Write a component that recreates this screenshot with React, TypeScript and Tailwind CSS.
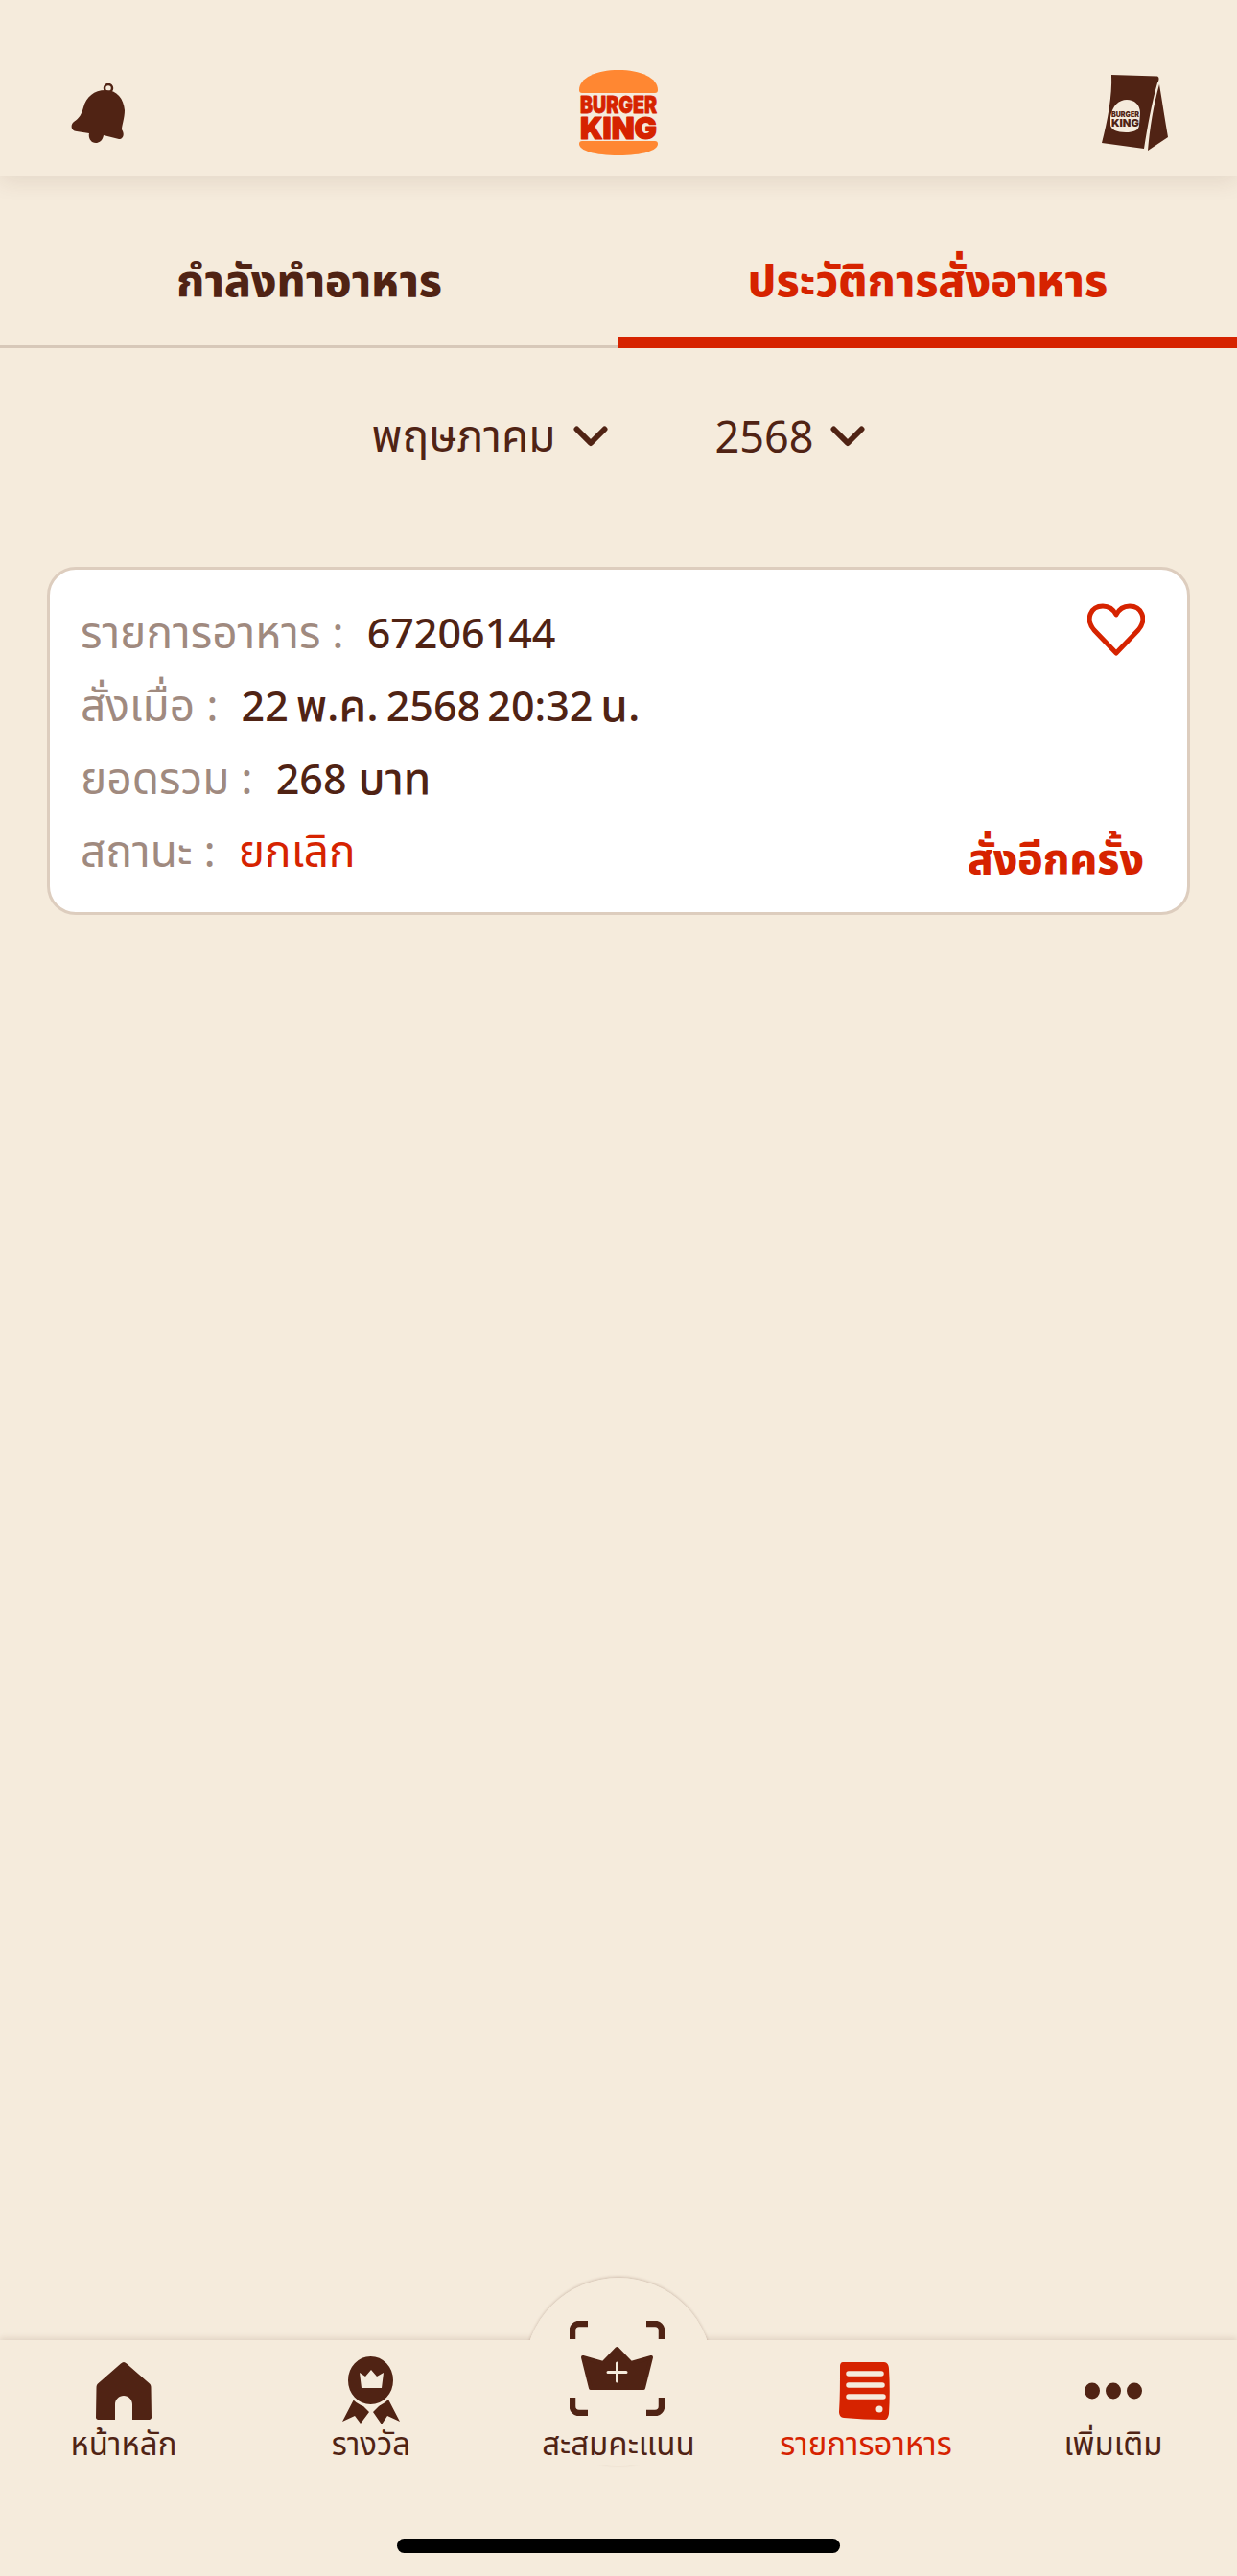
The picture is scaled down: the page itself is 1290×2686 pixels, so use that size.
import type { ReactNode } from "react";

function Bell() {
  return (
    <svg viewBox="0 0 56 62" className="h-[62px] w-[56px]" fill="#502314">
      <circle cx="39" cy="5" r="4" fill="none" stroke="#502314" strokeWidth="2.500" />
      <path d="M36 7C48 7 55 16 56 28 56 36 53 44 53 48 56 52 55 58 50 58L34 54C33 60 29 62 26 62 20 62 18 56 19 52L6 50C0 50-1 43 3 40 9 36 11 32 13 25 16 14 24 7 36 7z" />
    </svg>
  );
}

function Logo() {
  return (
    <svg viewBox="0 0 82 89" className="h-[89px] w-[82px]">
      <path d="M0 21C0 8 18 0 41 0s41 8 41 21c0 2-1 3-3 3H3c-2 0-3-1-3-3z" fill="#ff8732" />
      <path d="M3 74h76c2 0 3 1 3 3 0 7-16 12-41 12S0 84 0 77c0-2 1-3 3-3z" fill="#ff8732" />
      <g textAnchor="middle" fontFamily="Inter, sans-serif" fontWeight="900" fill="#d62300" stroke="#d62300" strokeLinejoin="round">
        <text x="41" y="45" fontSize="25" strokeWidth="0.8" textLength="80" lengthAdjust="spacingAndGlyphs">BURGER</text>
        <text x="41" y="71.500" fontSize="31" strokeWidth="1.200" textLength="80" lengthAdjust="spacingAndGlyphs">KING</text>
      </g>
    </svg>
  );
}

function Bag() {
  return (
    <svg viewBox="0 0 69 79" className="h-[79px] w-[69px]">
      <path d="M10 0l48 1.500c2 1 2 4 0 7C52 30 48 52 44 77L0 71C6 48 11 22 10 0z" fill="#502314" />
      <path d="M60 10c3 18 6 38 9 55L48 79c2-24 6-48 12-69z" fill="#502314" />
      <path d="M9 44c2-12 9-18 17-18s14 5 14 14l-1 12c0 6-6 8-14 8-9 0-16-3-16-8z" fill="#f5ebdc" />
      <g textAnchor="middle" fontFamily="Inter, sans-serif" fontWeight="900" fill="#502314">
        <text x="24.500" y="44" fontSize="8" textLength="29" lengthAdjust="spacingAndGlyphs">BURGER</text>
        <text x="24.500" y="54" fontSize="11" textLength="29" lengthAdjust="spacingAndGlyphs">KING</text>
      </g>
    </svg>
  );
}

function Chevron() {
  return (
    <svg viewBox="0 0 36 22" className="h-[22px] w-[36px]" fill="none" stroke="#502314" strokeWidth="6" strokeLinecap="round" strokeLinejoin="round">
      <path d="M3.500 3.500L18 18 32.500 3.500" />
    </svg>
  );
}

function Heart() {
  return (
    <svg viewBox="0 0 60 56" className="h-[56px] w-[60px]" fill="none" stroke="#d62300" strokeWidth="5" strokeLinejoin="round">
      <path d="M30 52L7 28C-3 16 4 3 16 3c6 0 11 3 14 9 3-6 8-9 14-9 12 0 19 13 9 25z" />
    </svg>
  );
}

function Num({ children }: { children: ReactNode }) {
  return <span className="text-[43px]">{children}</span>;
}

function Row({ label, children, danger }: { label: string; children: ReactNode; danger?: boolean }) {
  return (
    <div className="flex h-[76px] items-center">
      <span className="mr-6 text-[#a08a7f]">{label}</span>
      <span className={danger ? "text-[#d62300]" : "font-medium"}>{children}</span>
    </div>
  );
}

function NavHome() {
  return (
    <svg viewBox="0 0 58 60" className="h-[60px] w-[58px]">
      <path d="M26 1.500c2-2 4-2 6 0l24 21c1 1 1.500 2 1.500 4l.5 31c0 1.500-1 2.500-2.500 2.500H38V44c0-5-4-9-9-9s-9 4-9 9v16H2.500C1 60 0 59 0 57.500l.5-31c0-2 .5-3 1.500-4z" fill="#502314" />
    </svg>
  );
}

function NavReward() {
  return (
    <svg viewBox="0 0 60 71" className="h-[71px] w-[60px]">
      <path d="M13 43l15 15-9 12-6-8-13 6zM47 43L32 58l9 13 6-9 13 6z" fill="#502314" />
      <ellipse cx="29.500" cy="25" rx="25" ry="26.500" fill="#502314" stroke="#f5ebdc" strokeWidth="3" />
      <path d="M18 17l6 4 6-7 6 7 7-4-2 16H20z" fill="#f5ebdc" />
    </svg>
  );
}

function NavScan() {
  return (
    <svg viewBox="0 0 99 99" className="h-[99px] w-[99px]">
      <g fill="none" stroke="#502314" strokeWidth="6.500">
        <path d="M3 19V10c0-4 3-7 7-7h9" />
        <path d="M80 3h9c4 0 7 3 7 7v9" />
        <path d="M3 80v9c0 4 3 7 7 7h9" />
        <path d="M96 80v9c0 4-3 7-7 7h-9" />
      </g>
      <path d="M14 38l21 6 14.500-15L64 44l21-6-8 32H22z" fill="#502314" stroke="#502314" strokeWidth="4" strokeLinejoin="round" />
      <path d="M49.500 44v19M40 53.500h19" stroke="#f5ebdc" strokeWidth="3" strokeLinecap="round" />
    </svg>
  );
}

function NavReceipt() {
  return (
    <svg viewBox="0 0 53 60" className="ml-[-4px] h-[60px] w-[53px]">
      <path d="M4 0h43c3 0 5 3 5 7 1 15 1 32 0 47-1 4-2 6-5 6-14 0-28-1-42-2-3 0-5-3-5-6 1-15 1-31 1-48 0-2 1-4 3-4z" fill="#d62300" />
      <path d="M10 12h34M10 24h35M10 36h36" stroke="#f5ebdc" strokeWidth="5.500" strokeLinecap="round" />
      <circle cx="42" cy="49" r="3.500" fill="#f5ebdc" />
    </svg>
  );
}

function NavMore() {
  return (
    <svg viewBox="0 0 60 18" className="h-[18px] w-[60px]" fill="#502314">
      <ellipse cx="8" cy="9" rx="8" ry="8.500" />
      <ellipse cx="30" cy="9" rx="8" ry="8.500" />
      <ellipse cx="52" cy="9" rx="8" ry="8.500" />
    </svg>
  );
}

const navItems = [
  { label: "หน้าหลัก", icon: <NavHome /> },
  { label: "รางวัล", icon: <NavReward /> },
  { label: "สะสมคะแนน", icon: null },
  { label: "รายการอาหาร", icon: <NavReceipt />, active: true },
  { label: "เพิ่มเติม", icon: <NavMore /> },
];

export default function App() {
  return (
    <div className="relative flex h-[2686px] w-[1290px] flex-col overflow-hidden bg-[#f5ebdc] text-[46px] text-[#502314] [font-family:'Noto_Sans','Noto_Sans_Thai',Roboto,sans-serif]">
      <header className="flex h-[183px] shrink-0 items-end justify-between pr-[72px] pb-[21px] pl-[74px] shadow-[0_6px_22px_rgba(80,35,20,0.1)]">
        <div className="mb-[13px]"><Bell /></div>
        <div className="ml-[10px]"><Logo /></div>
        <div className="mb-[5px]"><Bag /></div>
      </header>

      <div className="flex h-[180px] shrink-0 text-[46px] leading-[60px] font-extrabold">
        <div className="w-1/2 border-b-[3px] border-[#d7c8b9] pt-[78px] text-center">กำลังทำอาหาร</div>
        <div className="w-1/2 border-b-[12px] border-[#d62300] pt-[78px] text-center text-[#d62300]">ประวัติการสั่งอาหาร</div>
      </div>

      <div className="mt-[62px] flex h-[60px] shrink-0 items-center justify-center gap-[112px]">
        <div className="flex items-center gap-[18px]"><span className="mt-[-3px]">พฤษภาคม</span> <Chevron /></div>
        <div className="flex items-center gap-[18px]"><span className="text-[45px]">2568</span> <Chevron /></div>
      </div>

      <div className="relative mx-[49px] mt-[106px] h-[363px] shrink-0 rounded-[30px] border-[3px] border-[#ddcdbe] bg-white pt-[26px] pl-[32px]">
        <Row label="รายการอาหาร :"><Num>67206144</Num></Row>
        <Row label="สั่งเมื่อ :"><span className="[word-spacing:-4px]"><Num>22</Num> พ.ค. <Num>2568 20:32</Num> น.</span></Row>
        <Row label="ยอดรวม :"><Num>268</Num> บาท</Row>
        <Row label="สถานะ :" danger>ยกเลิก</Row>
        <div className="absolute top-[35px] right-[44px]"><Heart /></div>
        <div className="absolute right-[45px] bottom-[24px] text-[44px] font-extrabold text-[#d62300]">สั่งอีกครั้ง</div>
      </div>

      <nav className="relative mt-auto h-[246px] shrink-0 shadow-[0_-2px_6px_rgba(80,35,20,0.12)]">
        <div className="absolute top-[-65px] left-[547px] h-[196px] w-[196px] rounded-full bg-[#f5ebdc] shadow-[0_-1px_3px_rgba(80,35,20,0.22)]" />
        <div className="absolute top-0 left-0 h-[130px] w-full bg-[#f5ebdc]" />
        <div className="absolute top-[-65px] left-[547px] h-[196px] w-[196px] rounded-full bg-[#f5ebdc]" />
        <div className="absolute top-[-20px] left-[594px]"><NavScan /></div>
        <div className="relative grid grid-cols-5">
          {navItems.map((item) => (
            <div key={item.label} className={`flex flex-col items-center ${item.active ? "text-[#d62300]" : ""}`}>
              <div className="mt-[17px] flex h-[71px] items-center justify-center">{item.icon}</div>
              <span className="mt-[-2px] text-[33px] leading-[44px] whitespace-nowrap">{item.label}</span>
            </div>
          ))}
        </div>
        <div className="absolute top-[207px] left-[414px] h-[15px] w-[462px] rounded-full bg-black" />
      </nav>
    </div>
  );
}
